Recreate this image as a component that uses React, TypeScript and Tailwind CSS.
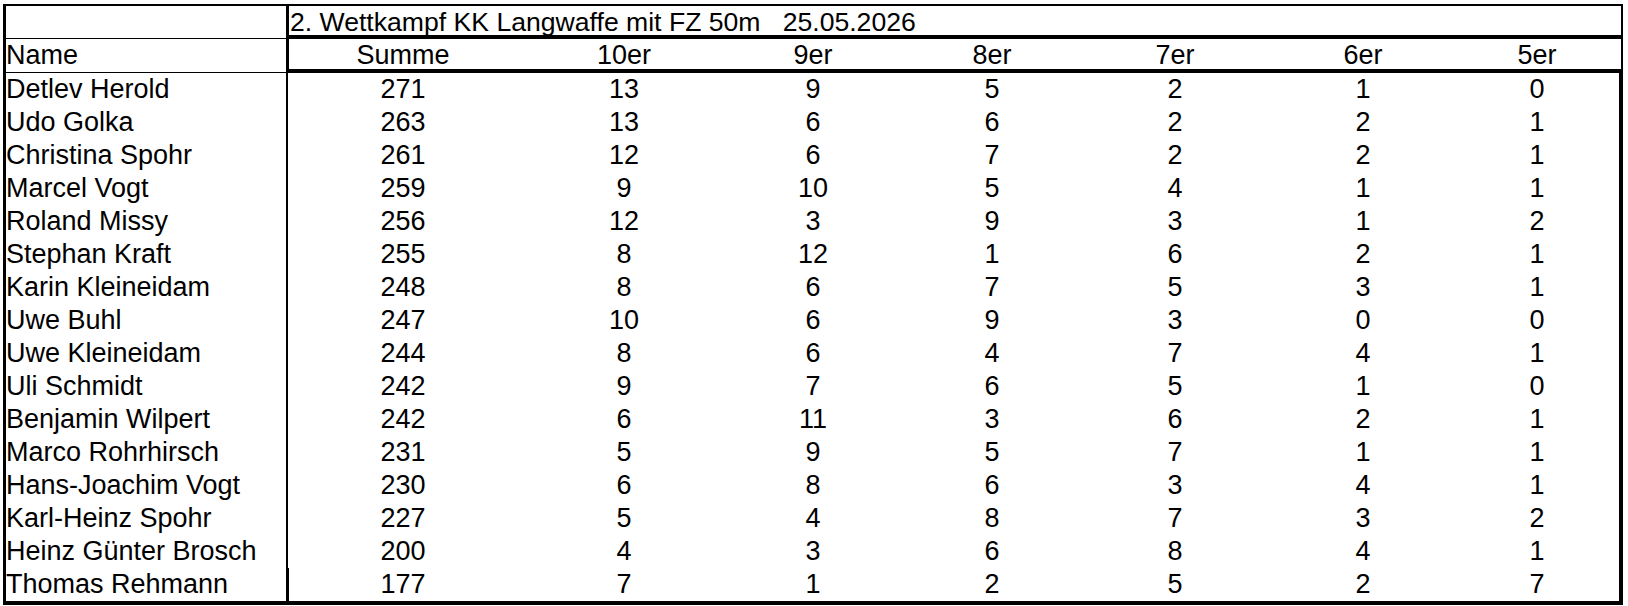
import React from "react";

const rows: [string, number, number, number, number, number, number, number][] = [
  ["Detlev Herold", 271, 13, 9, 5, 2, 1, 0],
  ["Udo Golka", 263, 13, 6, 6, 2, 2, 1],
  ["Christina Spohr", 261, 12, 6, 7, 2, 2, 1],
  ["Marcel Vogt", 259, 9, 10, 5, 4, 1, 1],
  ["Roland Missy", 256, 12, 3, 9, 3, 1, 2],
  ["Stephan Kraft", 255, 8, 12, 1, 6, 2, 1],
  ["Karin Kleineidam", 248, 8, 6, 7, 5, 3, 1],
  ["Uwe Buhl", 247, 10, 6, 9, 3, 0, 0],
  ["Uwe Kleineidam", 244, 8, 6, 4, 7, 4, 1],
  ["Uli Schmidt", 242, 9, 7, 6, 5, 1, 0],
  ["Benjamin Wilpert", 242, 6, 11, 3, 6, 2, 1],
  ["Marco Rohrhirsch", 231, 5, 9, 5, 7, 1, 1],
  ["Hans-Joachim Vogt", 230, 6, 8, 6, 3, 4, 1],
  ["Karl-Heinz Spohr", 227, 5, 4, 8, 7, 3, 2],
  ["Heinz Günter Brosch", 200, 4, 3, 6, 8, 4, 1],
  ["Thomas Rehmann", 177, 7, 1, 2, 5, 2, 7],
];

const colW = [
  "w-[228px]",
  "w-[214px]",
  "w-[164px]",
  "w-[194px]",
  "w-[172px]",
  "w-[204px]",
  "w-[144px]",
];

const headers = ["Summe", "10er", "9er", "8er", "7er", "6er", "5er"];

function Cols({ values }: { values: (string | number)[] }) {
  return (
    <>
      {values.map((v, i) => (
        <div key={i} className={`${colW[i]} shrink-0 text-center`}>
          {v}
        </div>
      ))}
    </>
  );
}

export default function App() {
  return (
    <div className="min-h-screen bg-white pl-[3px] pt-[4px] text-black font-['Liberation_Sans',Arial,sans-serif]">
      <div className="w-[1620px] text-[27px]">
        {/* Title row */}
        <div className="flex h-[35px]">
          <div className="w-[283px] shrink-0 border-l-[3px] border-t-[2px] border-b border-black" />
          <div className="flex-1 border-l-[3px] border-t-[2px] border-b-[4px] border-r-[2px] border-black pl-[1px] text-[26.6px] leading-[33px] whitespace-pre">
            {"2. Wettkampf KK Langwaffe mit FZ 50m   25.05.2026"}
          </div>
        </div>
        {/* Header row */}
        <div className="flex h-[34px] leading-[32px]">
          <div className="w-[283px] shrink-0 border-l-[3px] border-b border-black">Name</div>
          <div className="flex flex-1 border-l-[3px] border-b-[4px] border-r-[2px] border-black">
            <Cols values={headers} />
          </div>
        </div>
        {/* Data rows */}
        {rows.map((r, idx) => {
          const last = idx === rows.length - 1;
          return (
            <div
              key={idx}
              className={`flex leading-[33px] ${last ? "h-[37px]" : "h-[33px]"}`}
            >
              <div
                className={`w-[283px] shrink-0 whitespace-nowrap border-l-[3px] border-black ${
                  last ? "border-b-[4px]" : ""
                }`}
              >
                {r[0]}
              </div>
              <div
                className={`flex flex-1 border-r-[4px] border-black ${
                  last ? "border-l-[3px] border-b-[4px]" : "border-l-[2px] pl-[1px]"
                }`}
              >
                <Cols values={r.slice(1)} />
              </div>
            </div>
          );
        })}
      </div>
    </div>
  );
}
